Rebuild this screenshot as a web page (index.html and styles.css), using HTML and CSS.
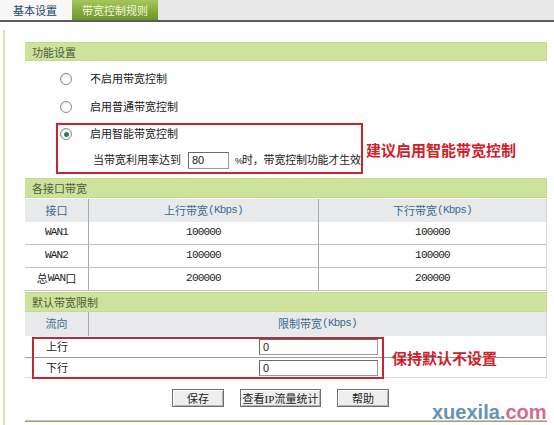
FILE: index.html
```html
<!DOCTYPE html>
<html>
<head>
<meta charset="utf-8">
<title>带宽控制规则</title>
<link rel="stylesheet" href="styles.css">
</head>
<body>
<div class="tabs">
  <div class="tab tab-plain">基本设置</div>
  <div class="tab tab-active">带宽控制规则</div>
</div>
<div class="page">
  <div class="rail"></div>
  <div class="content">
    <div class="sec-head">功能设置</div>
    <div class="options">
      <div class="opt opt1"><span class="radio"></span><span>不启用带宽控制</span></div>
      <div class="opt opt2"><span class="radio"></span><span>启用普通带宽控制</span></div>
      <div class="smart-row">
        <div class="redbox">
          <div class="opt opt3"><span class="radio on"></span><span>启用智能带宽控制</span></div>
          <div class="rate-row">
            <span>当带宽利用率达到</span>
            <input class="field field-rate" type="text" value="80">
            <span class="rate-tail"><span class="pct">%</span>时，带宽控制功能才生效</span>
          </div>
        </div>
        <div class="note note-smart">建议启用智能带宽控制</div>
      </div>
    </div>

    <div class="sec-head sec2">各接口带宽</div>
    <div class="bw">
      <div class="cell hd c1">接口</div>
      <div class="cell hd c2">上行带宽<span class="lat">(Kbps)</span></div>
      <div class="cell hd c3">下行带宽<span class="lat">(Kbps)</span></div>

      <div class="cell c1"><span class="lat">WAN1</span></div>
      <div class="cell c2"><span class="lat">100000</span></div>
      <div class="cell c3"><span class="lat">100000</span></div>

      <div class="cell c1"><span class="lat">WAN2</span></div>
      <div class="cell c2"><span class="lat">100000</span></div>
      <div class="cell c3"><span class="lat">100000</span></div>

      <div class="cell c1">总<span class="lat">WAN</span>口</div>
      <div class="cell c2"><span class="lat">200000</span></div>
      <div class="cell c3"><span class="lat">200000</span></div>
    </div>

    <div class="sec-head sec3">默认带宽限制</div>
    <div class="lim">
      <div class="lcell hd l1">流向</div>
      <div class="lcell hd l2">限制带宽 <span class="lat">(Kbps)</span></div>

      <div class="lcell l1 row-up">上行</div>
      <div class="lcell l2 row-up"><input class="field field-lim" type="text" value="0"></div>

      <div class="lcell l1 row-down">下行</div>
      <div class="lcell l2 row-down"><input class="field field-lim" type="text" value="0"></div>

      <div class="redmark"></div>
      <div class="note note-keep">保持默认不设置</div>
    </div>

    <div class="actions">
      <button class="btn btn-short">保存</button>
      <button class="btn btn-long">查看<span class="lat-b">IP</span>流量统计</button>
      <button class="btn btn-short">帮助</button>
    </div>
    <div class="foot-line"></div>

    <div class="watermark"><span class="wm-a">xuexila.</span><span class="wm-b">com</span></div>
  </div>
</div>
</body>
</html>
```

FILE: styles.css
```css
* { box-sizing: border-box; }

body {
  margin: 0;
  width: 554px;
  height: 425px;
  overflow: hidden;
  background: #fefefe;
  color: #1c1c1c;
  font: 11px/1.2 "Noto Sans CJK SC", "Liberation Sans", sans-serif;
}

/* tabs */
.tabs {
  display: flex;
  height: 22px;
  background: #e8e8e8;
  border-bottom: 2px solid #5c5c5c;
}
.tab {
  height: 20px;
  line-height: 20px;
  white-space: nowrap;
}
.tab-plain {
  width: 72px;
  padding-left: 13px;
  background: #f7f7f7;
  color: #24486c;
}
.tab-active {
  width: 86px;
  padding-left: 10px;
  background: linear-gradient(#a6c75e, #85aa3c 55%, #6d952b);
  color: #f4f7de;
}

/* page */
.page {
  display: flex;
  height: 403px;
}
.rail {
  width: 2px;
  margin: 8px 0 0 3px;
  background: #d5e5b4;
}
.content {
  position: relative;
  flex: 1;
  margin: 20px 7px 0 20px;
}

.sec-head {
  height: 19px;
  line-height: 19px;
  padding-left: 7px;
  background: #cde29b;
  border: 1px solid #c4da8d;
  border-left: 0;
  color: #4f5c3d;
}
.sec2 { margin-top: 4px; height: 20px; line-height: 19px; }
.sec3 { margin-top: 1px; height: 20px; line-height: 19px; }

/* options */
.opt {
  display: flex;
  align-items: center;
  gap: 18px;
}
.opt1 { height: 26px; margin-top: 5px; padding-left: 35px; }
.opt2 { height: 27px; margin-top: 1px; padding-left: 35px; }
.opt3 { height: 18px; }

.radio {
  width: 12px;
  height: 12px;
  border-radius: 50%;
  border: 1px solid #7f8f9e;
  background: radial-gradient(circle at 60% 60%, #ffffff 30%, #dcdfe2);
  position: relative;
  flex: none;
}
.radio.on::after {
  content: "";
  position: absolute;
  left: 2.5px;
  top: 2.5px;
  width: 5px;
  height: 5px;
  border-radius: 50%;
  background: #3d7a3d;
}

.smart-row {
  display: flex;
  align-items: center;
  margin-top: 3px;
}
.redbox {
  width: 307px;
  margin-left: 31px;
  border: 2px solid #c8262e;
  padding: 0 2px 3px 2px;
}
.rate-row {
  display: flex;
  align-items: center;
  height: 18px;
  margin-top: 8px;
  padding-left: 33px;
  white-space: nowrap;
}
.rate-tail { letter-spacing: -0.2px; }
.pct {
  font-family: "Liberation Sans", sans-serif;
  font-size: 9px;
  letter-spacing: -1px;
}

.field {
  height: 17px;
  border: 1px solid #9a9a9a;
  border-top-color: #6a6a6a;
  border-left-color: #6a6a6a;
  background: #fff;
  color: #1c1c1c;
  font: 11px "Liberation Sans", sans-serif;
  padding: 0 0 0 3px;
  margin: 0;
  outline: none;
}
.field-rate { width: 41px; margin: 0 6px 0 7px; }
.field-lim { width: 119px; height: 16px; }

.note {
  color: #d0202a;
  font-size: 15px;
  font-weight: bold;
  line-height: 20px;
  white-space: nowrap;
}
.note-smart { margin: 3px 0 0 3px; }

/* interface bandwidth table */
.lat {
  font-family: "Liberation Mono", monospace;
  letter-spacing: -0.8px;
}
.bw {
  display: grid;
  grid-template-columns: 64px 230px 1fr;
  margin-top: 1px;
  border-right: 1px solid #d4d4d4;
}
.cell {
  height: 23px;
  display: flex;
  align-items: center;
  justify-content: center;
  background: #fff;
  border-bottom: 1px solid #c2c2c2;
  white-space: nowrap;
}
.cell.hd {
  background: #e7e9eb;
  color: #3d6c8d;
  border-bottom: 0;
}
.cell.c1, .cell.c2 { border-right: 1px solid #ababab; }

/* default limit table */
.lim {
  position: relative;
  display: grid;
  grid-template-columns: 64px 1fr;
  border-right: 1px solid #d4d4d4;
}
.lcell {
  display: flex;
  align-items: center;
  justify-content: center;
  background: #fff;
  white-space: nowrap;
}
.lcell.hd {
  height: 24px;
  background: #e7e9eb;
  color: #3d6c8d;
}
.lcell.hd.l1 { border-right: 1px solid #ababab; }
.row-up { height: 22px; border-bottom: 1px solid #9c9c9c; padding-top: 1px; }
.row-down { height: 20px; border-bottom: 1px solid #dcdcdc; }
.lcell.l2.row-up, .lcell.l2.row-down { padding-left: 2px; }

.redmark {
  position: absolute;
  left: 7px;
  top: 25px;
  width: 352px;
  height: 42px;
  border: 2px solid #c8262e;
  pointer-events: none;
}
.note-keep {
  position: absolute;
  left: 367px;
  top: 36px;
}

/* buttons */
.actions {
  display: flex;
  gap: 16px;
  margin-top: 11px;
  padding-left: 147px;
}
.btn {
  height: 18px;
  padding: 0;
  border: 1px solid #6e6e6e;
  background: #eeeeee;
  box-shadow: inset 1px 1px #ffffff, inset -1px -1px #b4b4b4;
  color: #1c1c1c;
  font: 11px/16px "Noto Sans CJK SC", sans-serif;
  white-space: nowrap;
}
.btn-short { width: 52px; }
.btn-long { width: 81px; }
.lat-b { font-family: "Liberation Serif", serif; }

.foot-line {
  margin-top: 13px;
  height: 2px;
  border-top: 1px solid #c9cf86;
  border-bottom: 1px solid #9d9d9d;
}

.watermark {
  position: absolute;
  left: 407px;
  top: 358px;
  font: bold 20px/24px "Liberation Sans", sans-serif;
  white-space: nowrap;
}
.wm-a { color: #6592b6; }
.wm-b { color: #d56c90; }
```
